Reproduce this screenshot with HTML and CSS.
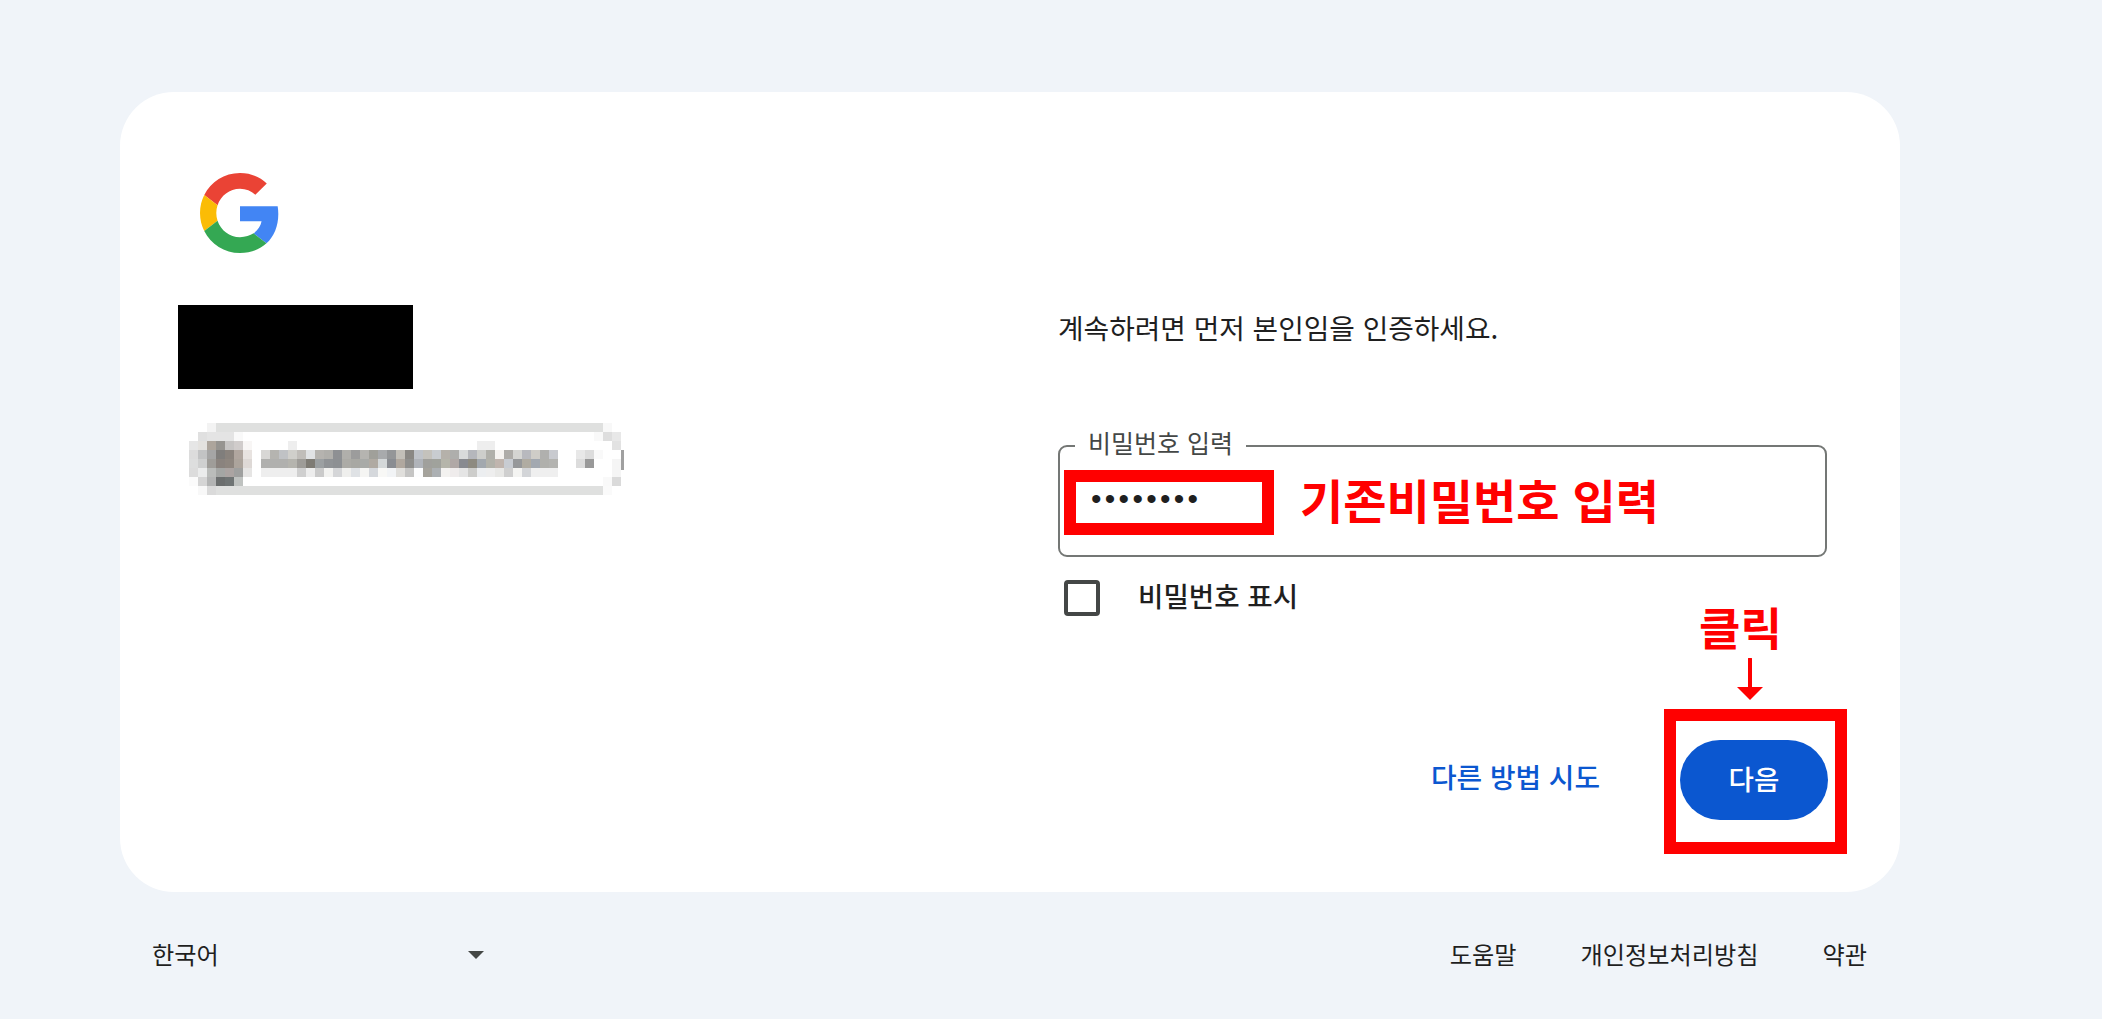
FILE: index.html
```html
<!DOCTYPE html>
<html lang="ko">
<head>
  <meta charset="UTF-8" />
  <title>로그인 - Google 계정</title>
  <link rel="stylesheet" href="styles.css">
</head>
<body>
  <main class="card">
    <!-- 왼쪽: 로고, 이름, 이메일 -->
    <div class="left">
      <svg class="logo" viewBox="0 0 48 48" width="80" height="80">
        <path fill="#EA4335" d="M24 9.5c3.54 0 6.71 1.22 9.21 3.6l6.85-6.85C35.9 2.38 30.47 0 24 0 14.62 0 6.51 5.38 2.56 13.22l7.98 6.19C12.43 13.72 17.74 9.5 24 9.5z"/>
        <path fill="#4285F4" d="M46.98 24.55c0-1.57-.15-3.09-.38-4.55H24v9.02h12.94c-.58 2.96-2.26 5.48-4.78 7.18l7.73 6c4.51-4.18 7.09-10.36 7.09-17.65z"/>
        <path fill="#FBBC05" d="M10.53 28.59c-.48-1.45-.76-2.99-.76-4.59s.27-3.14.76-4.59l-7.98-6.19C.92 16.46 0 20.12 0 24c0 3.88.92 7.54 2.56 10.78l7.97-6.19z"/>
        <path fill="#34A853" d="M24 48c6.48 0 11.93-2.13 15.89-5.81l-7.73-6c-2.15 1.45-4.92 2.3-8.16 2.3-6.26 0-11.57-4.22-13.47-9.91l-7.98 6.19C6.51 42.62 14.62 48 24 48z"/>
      </svg>
      <div class="name-mask"></div>
      <!-- 이메일 모자이크 -->
      <svg class="email-mosaic" viewBox="0 0 48.5 8" width="436.5" height="72" shape-rendering="crispEdges">
        <g fill="#dfe0df">
          <rect x="3" y="0" width="43" height="1"/>
          <rect x="3" y="7" width="43" height="1"/>
        </g>
        <g>
          <rect x="2" y="0" width="1" height="1" fill="#f3f3f3"/><rect x="46" y="0" width="1" height="1" fill="#f8f8f8"/>
          <rect x="1" y="1" width="1" height="1" fill="#e0e0e0"/><rect x="2" y="1" width="3" height="1" fill="#e4e4e4"/><rect x="5" y="1" width="1" height="1" fill="#f9f9f9"/><rect x="45" y="1" width="1" height="1" fill="#f9f9f9"/><rect x="46" y="1" width="1" height="1" fill="#dedede"/><rect x="47" y="1" width="1" height="1" fill="#e8e8e8"/>
          <rect x="0" y="2" width="1" height="1" fill="#e6e6e6"/><rect x="1" y="2" width="1" height="1" fill="#e4e2df"/><rect x="2" y="2" width="1" height="1" fill="#ada59c"/><rect x="3" y="2" width="1" height="1" fill="#969490"/><rect x="4" y="2" width="1" height="1" fill="#c6c4c3"/><rect x="5" y="2" width="1" height="1" fill="#d0cccb"/><rect x="6" y="2" width="1" height="1" fill="#f8f6f5"/><rect x="11" y="2" width="1" height="1" fill="#eeeeee"/><rect x="32" y="2" width="2" height="1" fill="#eeeeee"/><rect x="47" y="2" width="1" height="1" fill="#e2e2e2"/>
          <rect x="0" y="3" width="1" height="1" fill="#dcdcdc"/><rect x="1" y="3" width="1" height="1" fill="#c2c3c4"/><rect x="2" y="3" width="1" height="1" fill="#a5a5a5"/><rect x="3" y="3" width="1" height="1" fill="#807e7c"/><rect x="4" y="3" width="1" height="1" fill="#8a837d"/><rect x="5" y="3" width="1" height="1" fill="#b0a69f"/><rect x="6" y="3" width="1" height="1" fill="#e8e3e0"/>
          <rect x="8" y="3" width="1" height="1" fill="#d8d7d5"/><rect x="9" y="3" width="1" height="1" fill="#b5b4b0"/><rect x="10" y="3" width="1" height="1" fill="#c0c2c5"/><rect x="11" y="3" width="1" height="1" fill="#d0cfcb"/><rect x="12" y="3" width="1" height="1" fill="#c0bdb9"/><rect x="13" y="3" width="1" height="1" fill="#e0e2e4"/><rect x="14" y="3" width="1" height="1" fill="#b5b3af"/><rect x="15" y="3" width="1" height="1" fill="#b0afab"/><rect x="16" y="3" width="1" height="1" fill="#8e9093"/><rect x="17" y="3" width="1" height="1" fill="#b0afab"/><rect x="18" y="3" width="1" height="1" fill="#9c9c9c"/><rect x="19" y="3" width="1" height="1" fill="#b5b4b0"/><rect x="20" y="3" width="1" height="1" fill="#a0a09a"/><rect x="21" y="3" width="1" height="1" fill="#a8aaac"/><rect x="22" y="3" width="1" height="1" fill="#949698"/><rect x="23" y="3" width="1" height="1" fill="#c2bfb8"/><rect x="24" y="3" width="1" height="1" fill="#8a8884"/><rect x="25" y="3" width="1" height="1" fill="#bfc3c9"/><rect x="26" y="3" width="1" height="1" fill="#c4c2bc"/><rect x="27" y="3" width="1" height="1" fill="#c8ccd0"/><rect x="28" y="3" width="1" height="1" fill="#b5b1aa"/><rect x="29" y="3" width="1" height="1" fill="#aeaeac"/><rect x="30" y="3" width="1" height="1" fill="#d8dadb"/><rect x="31" y="3" width="1" height="1" fill="#b5b7bc"/><rect x="32" y="3" width="1" height="1" fill="#cdcecb"/><rect x="33" y="3" width="1" height="1" fill="#b0b0aa"/><rect x="34" y="3" width="1" height="1" fill="#f5f3f0"/><rect x="35" y="3" width="1" height="1" fill="#aeaca8"/><rect x="36" y="3" width="1" height="1" fill="#d5d5d2"/><rect x="37" y="3" width="1" height="1" fill="#b8b9be"/><rect x="38" y="3" width="1" height="1" fill="#cfcdc8"/><rect x="39" y="3" width="1" height="1" fill="#b0b0ae"/><rect x="40" y="3" width="1" height="1" fill="#c8cacf"/><rect x="43" y="3" width="1" height="1" fill="#e8e8e8"/><rect x="44" y="3" width="1" height="1" fill="#dcdcdc"/><rect x="45" y="3" width="1" height="1" fill="#f9f9f9"/>
          <rect x="0" y="4" width="1" height="1" fill="#dddede"/><rect x="1" y="4" width="1" height="1" fill="#cfd0d0"/><rect x="2" y="4" width="1" height="1" fill="#9f9d99"/><rect x="3" y="4" width="1" height="1" fill="#8a837e"/><rect x="4" y="4" width="1" height="1" fill="#8e867f"/><rect x="5" y="4" width="1" height="1" fill="#aca49c"/><rect x="6" y="4" width="1" height="1" fill="#ded9d6"/>
          <rect x="8" y="4" width="3" height="1" fill="#b0b0ae"/><rect x="11" y="4" width="1" height="1" fill="#b5b4ae"/><rect x="12" y="4" width="1" height="1" fill="#9e9c98"/><rect x="13" y="4" width="1" height="1" fill="#7e7b74"/><rect x="14" y="4" width="1" height="1" fill="#9ca0a2"/><rect x="15" y="4" width="1" height="1" fill="#909396"/><rect x="16" y="4" width="1" height="1" fill="#8d9093"/><rect x="17" y="4" width="1" height="1" fill="#acaba6"/><rect x="18" y="4" width="1" height="1" fill="#a8a8a3"/><rect x="19" y="4" width="1" height="1" fill="#a8aaa7"/><rect x="20" y="4" width="1" height="1" fill="#b0aaa2"/><rect x="21" y="4" width="1" height="1" fill="#d4d8d9"/><rect x="22" y="4" width="1" height="1" fill="#8a8d92"/><rect x="23" y="4" width="1" height="1" fill="#b0a89f"/><rect x="24" y="4" width="1" height="1" fill="#8f8f8d"/><rect x="25" y="4" width="1" height="1" fill="#b0b4ba"/><rect x="26" y="4" width="1" height="1" fill="#a0a09c"/><rect x="27" y="4" width="1" height="1" fill="#a0a29c"/><rect x="28" y="4" width="1" height="1" fill="#b5b5aa"/><rect x="29" y="4" width="1" height="1" fill="#b0a8a6"/><rect x="30" y="4" width="1" height="1" fill="#888a90"/><rect x="31" y="4" width="1" height="1" fill="#8d8a80"/><rect x="32" y="4" width="1" height="1" fill="#a2a8ae"/><rect x="33" y="4" width="1" height="1" fill="#b2b2aa"/><rect x="34" y="4" width="1" height="1" fill="#c0b5ae"/><rect x="35" y="4" width="1" height="1" fill="#c8ccd2"/><rect x="36" y="4" width="1" height="1" fill="#96989a"/><rect x="37" y="4" width="1" height="1" fill="#b0aca2"/><rect x="38" y="4" width="1" height="1" fill="#a2a8b0"/><rect x="39" y="4" width="1" height="1" fill="#b0b0ac"/><rect x="40" y="4" width="1" height="1" fill="#b3b3b0"/><rect x="43" y="4" width="1" height="1" fill="#dcdcdc"/><rect x="44" y="4" width="1" height="1" fill="#999999"/><rect x="47" y="4" width="1" height="1" fill="#f5f5f5"/>
          <rect x="0" y="5" width="1" height="1" fill="#dcdcdc"/><rect x="1" y="5" width="1" height="1" fill="#ebecec"/><rect x="2" y="5" width="1" height="1" fill="#babcba"/><rect x="3" y="5" width="1" height="1" fill="#a4a6a4"/><rect x="4" y="5" width="1" height="1" fill="#aba4a2"/><rect x="5" y="5" width="1" height="1" fill="#9fa09f"/><rect x="6" y="5" width="1" height="1" fill="#e6e5e4"/>
          <rect x="8" y="5" width="4" height="1" fill="#eeeeee"/><rect x="12" y="5" width="1" height="1" fill="#cfcfcf"/><rect x="13" y="5" width="1" height="1" fill="#ededed"/><rect x="14" y="5" width="1" height="1" fill="#cacaca"/><rect x="15" y="5" width="1" height="1" fill="#f2f2f0"/><rect x="16" y="5" width="1" height="1" fill="#d5d6d8"/><rect x="17" y="5" width="1" height="1" fill="#efefed"/><rect x="18" y="5" width="1" height="1" fill="#dfe2e5"/><rect x="19" y="5" width="1" height="1" fill="#f5f5f3"/><rect x="20" y="5" width="1" height="1" fill="#d5d8dc"/><rect x="21" y="5" width="1" height="1" fill="#f8f8f6"/><rect x="22" y="5" width="1" height="1" fill="#f2f4f6"/><rect x="23" y="5" width="1" height="1" fill="#e0dfdc"/><rect x="24" y="5" width="1" height="1" fill="#c5c5c4"/><rect x="25" y="5" width="1" height="1" fill="#fcfdfe"/><rect x="26" y="5" width="1" height="1" fill="#a5a39c"/><rect x="27" y="5" width="1" height="1" fill="#acb0b3"/><rect x="28" y="5" width="1" height="1" fill="#f3f2f0"/><rect x="29" y="5" width="1" height="1" fill="#efecec"/><rect x="30" y="5" width="1" height="1" fill="#e5e5e5"/><rect x="31" y="5" width="1" height="1" fill="#cdcdcb"/><rect x="32" y="5" width="1" height="1" fill="#eceef0"/><rect x="33" y="5" width="1" height="1" fill="#eeeeee"/><rect x="34" y="5" width="1" height="1" fill="#e8e8e6"/><rect x="35" y="5" width="1" height="1" fill="#cfcfcf"/><rect x="36" y="5" width="1" height="1" fill="#f4f4f2"/><rect x="37" y="5" width="1" height="1" fill="#d3d5d8"/><rect x="38" y="5" width="3" height="1" fill="#efefef"/><rect x="47" y="5" width="1" height="1" fill="#f5f5f5"/>
          <rect x="0" y="6" width="1" height="1" fill="#fbfbfb"/><rect x="1" y="6" width="1" height="1" fill="#d5d5d5"/><rect x="2" y="6" width="1" height="1" fill="#b3b4b4"/><rect x="3" y="6" width="1" height="1" fill="#6b6e6e"/><rect x="4" y="6" width="1" height="1" fill="#6f7474"/><rect x="5" y="6" width="1" height="1" fill="#bfc2c0"/><rect x="46" y="6" width="1" height="1" fill="#f9f9f9"/><rect x="47" y="6" width="1" height="1" fill="#dadada"/>
          <rect x="1" y="7" width="1" height="1" fill="#f8f8f8"/><rect x="2" y="7" width="1" height="1" fill="#dadada"/><rect x="46" y="7" width="1" height="1" fill="#fafafa"/>
          <rect x="48.05" y="3" width=".3" height="2.2" fill="#a0a0a0"/>
        </g>
      </svg>
    </div>

    <!-- 오른쪽: 비밀번호 폼 -->
    <div class="right">
      <p class="subtitle">계속하려면 먼저 본인임을 인증하세요.</p>

      <div class="field">
        <span class="field-label">비밀번호 입력</span>
        <span class="field-value">••••••••</span>
        <div class="mark mark-input"></div>
        <span class="note note-input">기존비밀번호 입력</span>
      </div>

      <div class="show-pw">
        <span class="checkbox"></span>
        <span class="show-label">비밀번호 표시</span>
      </div>

      <div class="actions">
        <a class="try-other">다른 방법 시도</a>
        <div class="next-wrap">
          <button class="next-btn">다음</button>
          <div class="mark mark-next"></div>
          <span class="note note-next">클릭</span>
          <svg class="note-arrow" viewBox="0 0 26 42" width="26" height="42">
            <path d="M13 1v30" stroke="#f00" stroke-width="4" stroke-linecap="round" fill="none"/>
            <path d="M0 29h26L13 42z" fill="#f00"/>
          </svg>
        </div>
      </div>
    </div>
  </main>

  <footer class="footer">
    <div class="lang">
      <span>한국어</span>
      <span class="caret"></span>
    </div>
    <nav class="links">
      <a>도움말</a>
      <a>개인정보처리방침</a>
      <a>약관</a>
    </nav>
  </footer>
</body>
</html>
```

FILE: styles.css
```css
html, body {
  height: 100%;
}

body {
  margin: 0;
  padding-top: 92px;
  box-sizing: border-box;
  background: #f0f4f9;
  color: #1f1f1f;
  font-family: "Noto Sans CJK KR", "Noto Sans", sans-serif;
  overflow: hidden;
}

.card {
  display: flex;
  box-sizing: border-box;
  width: 1780px;
  height: 800px;
  margin-left: 120px;
  padding: 81px 73px 72px 58px;
  background: #fff;
  border-radius: 54px;
}

.left {
  width: 880px;
  flex: none;
}

.logo {
  display: block;
  margin-left: 22px;
}

.name-mask {
  width: 235px;
  height: 84px;
  margin-top: 52px;
  background: #000;
}

.email-mosaic {
  display: block;
  margin: 34px 0 0 11px;
}

.right {
  flex: 1;
  display: flex;
  flex-direction: column;
}

.subtitle {
  margin: 134px 0 0;
  font-size: 27.8px;
  line-height: 40px;
}

.field {
  position: relative;
  height: 112px;
  margin-top: 98px;
  box-sizing: border-box;
  border: 2px solid #747775;
  border-radius: 9px;
}

.field-label {
  position: absolute;
  top: -20px;
  left: 15px;
  padding: 0 13px;
  background: #fff;
  color: #444746;
  font-size: 25px;
  line-height: 30px;
}

.field-value {
  display: block;
  padding: 34px 0 0 31px;
  font-family: "Liberation Sans", sans-serif;
  font-size: 30px;
  line-height: 36px;
  letter-spacing: 3.3px;
}

.mark {
  position: absolute;
  box-sizing: border-box;
  border: 12px solid #f00;
}

.mark-input {
  top: 23px;
  left: 4px;
  width: 210px;
  height: 65px;
}

.note {
  position: absolute;
  color: #f00;
  font-weight: 700;
  white-space: nowrap;
}

.note-input {
  top: 22px;
  left: 240px;
  font-size: 47px;
  line-height: 60px;
}

.show-pw {
  display: flex;
  align-items: center;
  gap: 38px;
  margin: 18px 0 0 6px;
  font-size: 27.6px;
  font-weight: 500;
}

.show-label {
  padding-bottom: 5px;
}

.checkbox {
  width: 36px;
  height: 36px;
  box-sizing: border-box;
  border: 4px solid #444746;
  border-radius: 4px;
}

.actions {
  display: flex;
  justify-content: flex-end;
  align-items: center;
  gap: 80px;
  margin-top: auto;
  margin-right: -1px;
}

.try-other {
  padding-bottom: 8px;
  color: #0b57d0;
  font-size: 27.8px;
  font-weight: 500;
}

.next-wrap {
  position: relative;
}

.next-btn {
  display: block;
  width: 148px;
  height: 80px;
  padding-bottom: 5px;
  border: none;
  border-radius: 40px;
  background: #0b57d0;
  color: #fff;
  font-family: inherit;
  font-size: 27.6px;
  font-weight: 500;
}

.mark-next {
  top: -31px;
  left: -16px;
  width: 183px;
  height: 145px;
}

.note-next {
  top: -141px;
  left: 19px;
  font-size: 45px;
  line-height: 56px;
}

.note-arrow {
  position: absolute;
  top: -82px;
  left: 57px;
}

.footer {
  display: flex;
  justify-content: space-between;
  align-items: center;
  height: 122px;
  padding: 0 235px 0 152px;
  font-size: 24.2px;
}

.lang {
  display: flex;
  justify-content: space-between;
  align-items: center;
  width: 332px;
}

.caret {
  width: 0;
  height: 0;
  margin-top: 4px;
  border-left: 8px solid transparent;
  border-right: 8px solid transparent;
  border-top: 8px solid #444746;
}

.links {
  display: flex;
  gap: 64px;
}
```
